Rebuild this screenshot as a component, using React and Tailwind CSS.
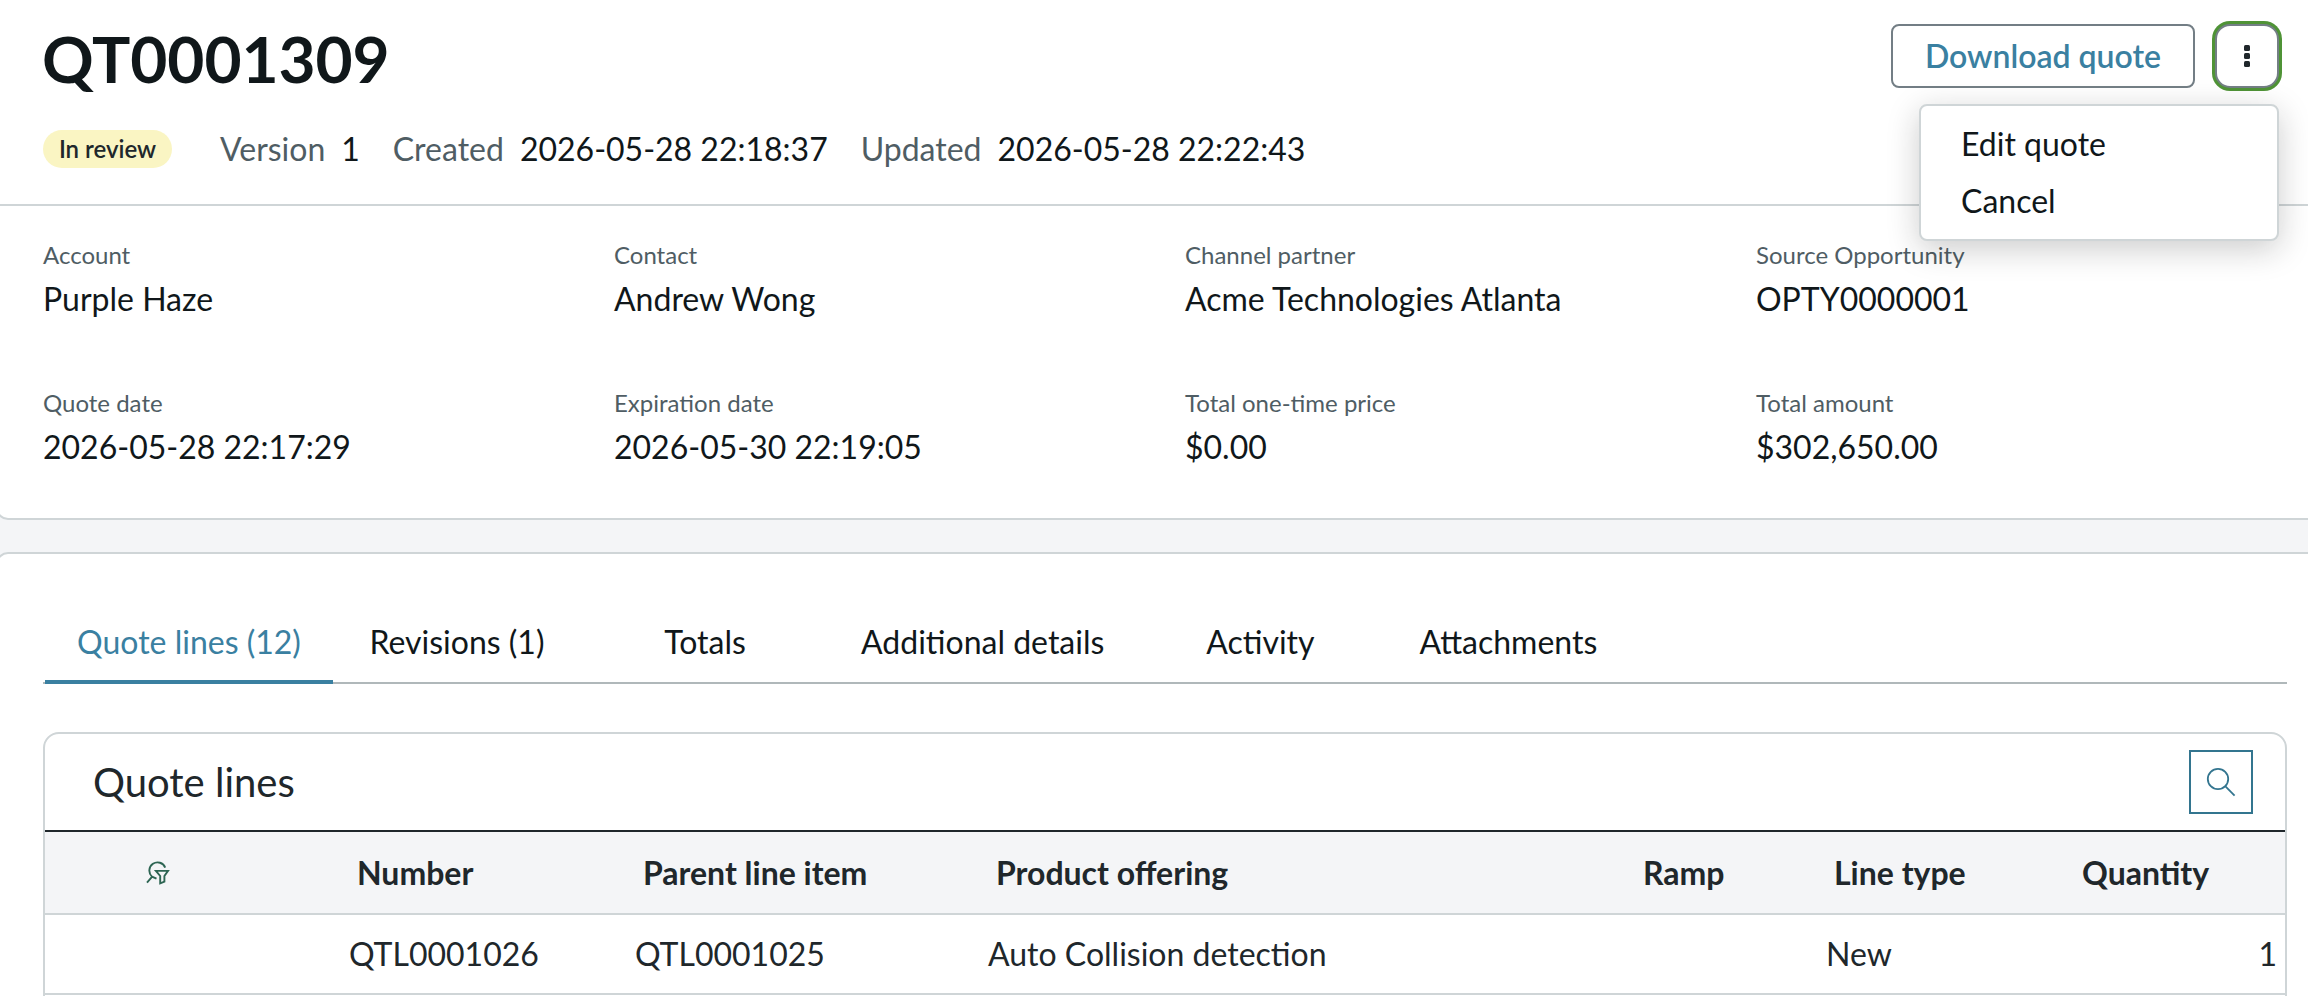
const details = [
  ["Account", "Purple Haze"],
  ["Contact", "Andrew Wong"],
  ["Channel partner", "Acme Technologies Atlanta"],
  ["Source Opportunity", "OPTY0000001"],
  ["Quote date", "2026-05-28 22:17:29"],
  ["Expiration date", "2026-05-30 22:19:05"],
  ["Total one-time price", "$0.00"],
  ["Total amount", "$302,650.00"],
];

const tabs = ["Revisions (1)", "Totals", "Additional details", "Activity", "Attachments"];

function Meta({ label, value }) {
  return (
    <div className="flex gap-4">
      <dt className="text-[#4f5d64]">{label}</dt>
      <dd>{value}</dd>
    </div>
  );
}

function MoreMenu() {
  return (
    <div className="relative">
      <button aria-label="More actions" className="flex h-16 w-16 items-center justify-center rounded-[15px] border-2 border-[#737e85] bg-white ring-3 ring-[#4f9336]">
        <svg width="6" height="22" viewBox="0 0 6 22" fill="#20272b">
          <rect width="6" height="6" rx="1.5" />
          <rect y="8" width="6" height="6" rx="1.5" />
          <rect y="16" width="6" height="6" rx="1.5" />
        </svg>
      </button>
      <ul className="absolute top-20 right-0 z-10 h-[137px] w-[360px] rounded-lg border-2 border-[#cfd5d7] bg-white pt-[10px] shadow-[0_8px_32px_rgba(23,23,23,0.22)]">
        <li className="h-[57px] px-10 py-2 leading-10">Edit quote</li>
        <li className="h-[57px] px-10 py-2 leading-10">Cancel</li>
      </ul>
    </div>
  );
}

function FilterSearchIcon() {
  return (
    <svg className="block" width="24" height="24" viewBox="0 0 24 24" fill="none" stroke="#2d6553" strokeWidth="1.9">
      <path d="M19.2 6.6A8.2 8.2 0 1 0 6 15.6L10.5 17.6M6.4 15.4L1 21.6" />
      <path d="M9.9 9.9H22L18.4 15V20.6L14.2 22.3V15Z" />
    </svg>
  );
}

export default function App() {
  return (
    <div className="h-[996px] w-[2308px] overflow-hidden bg-[#f4f5f7] font-['Lato',sans-serif] text-[32px] leading-10 text-[#10171a]">
      <section className="-ml-1 h-[520px] rounded-bl-xl border-b-2 border-l-2 border-[#cfd5d7] bg-white">
        <header className="flex h-[206px] justify-between border-b-2 border-[#cfd5d7] pr-[29px] pl-[45px]">
          <div className="pt-[27px]">
            <h1 className="-ml-px text-[64px] leading-[64px] font-bold tracking-[-0.1px]">QT0001309</h1>
            <dl className="mt-[38px] flex items-center gap-[33px]">
              <div className="mr-[15px] flex h-[38px] w-[129px] items-center justify-center rounded-full bg-[#faf5c3] text-2xl font-semibold text-[#20272b]">
                In review
              </div>
              <Meta label="Version" value="1" />
              <Meta label="Created" value="2026-05-28 22:18:37" />
              <Meta label="Updated" value="2026-05-28 22:22:43" />
            </dl>
          </div>
          <div className="flex gap-5 pt-6">
            <button className="h-16 w-[304px] rounded-lg border-2 border-[#737e85] bg-white font-semibold text-[#3a80a1]">
              Download quote
            </button>
            <MoreMenu />
          </div>
        </header>
        <dl className="grid grid-cols-[repeat(4,571px)] gap-y-[68px] pt-[33px] pl-[45px]">
          {details.map(([label, value]) => (
            <div key={label} className="flex flex-col gap-2">
              <dt className="text-2xl leading-8 text-[#4f5d64]">{label}</dt>
              <dd>{value}</dd>
            </div>
          ))}
        </dl>
      </section>

      <section className="mt-8 -ml-1 h-[460px] rounded-tl-xl border-t-2 border-l-2 border-[#cfd5d7] bg-white pr-[21px] pl-[45px]">
        <nav className="flex h-[130px] items-end border-b-2 border-[#b0b8ba] pl-0.5">
          <button className="-mb-0.5 h-[66px] w-72 border-b-4 border-[#3a80a1] pb-3.5 text-[#3a80a1]">Quote lines (12)</button>
          {tabs.map((tab) => (
            <button key={tab} className="min-w-[248px] px-8 pb-5">
              {tab}
            </button>
          ))}
        </nav>

        <div className="mt-12 h-[280px] overflow-hidden rounded-t-2xl border-2 border-[#cfd5d7] text-[#20272b]">
          <div className="flex h-[98px] items-center justify-between border-b-2 border-[#20272b] pr-8 pl-12">
            <h2 className="text-[40px] leading-[48px]">Quote lines</h2>
            <button aria-label="Search" className="flex h-16 w-16 items-center justify-center border-2 border-[#33758f]">
              <svg width="30" height="30" viewBox="0 0 30 30" fill="none" stroke="#33758f" strokeWidth="1.8">
                <circle cx="12" cy="12" r="10.2" />
                <path d="M19.2 19.2L28.6 28.6" />
              </svg>
            </button>
          </div>
          <table className="w-full table-fixed border-collapse text-left">
            <colgroup>
              <col className="w-[296px]" />
              <col className="w-[286px]" />
              <col className="w-[353px]" />
              <col className="w-[647px]" />
              <col className="w-[191px]" />
              <col className="w-[248px]" />
              <col />
            </colgroup>
            <thead>
              <tr className="h-[82px] border-b-2 border-[#cfd5d7] bg-[#f4f5f7]">
                <th className="pl-[101px]"><FilterSearchIcon /></th>
                <th className="pl-4">Number</th>
                <th className="pl-4">Parent line item</th>
                <th className="pl-4">Product offering</th>
                <th className="pl-4">Ramp</th>
                <th className="pl-4">Line type</th>
                <th className="pl-4">Quantity</th>
              </tr>
            </thead>
            <tbody>
              <tr className="h-20 border-b-2 border-[#cfd5d7]">
                <td />
                <td className="pl-2">QTL0001026</td>
                <td className="pl-2">QTL0001025</td>
                <td className="pl-2">Auto Collision detection</td>
                <td />
                <td className="pl-2">New</td>
                <td className="pr-2 text-right">1</td>
              </tr>
            </tbody>
          </table>
        </div>
      </section>
    </div>
  );
}
